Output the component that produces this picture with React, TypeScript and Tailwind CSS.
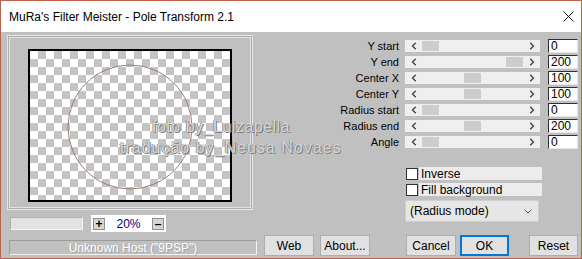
import React from "react";

const sliders = [
  { label: "Y start", value: "0", pos: 0 },
  { label: "Y end", value: "200", pos: 1 },
  { label: "Center X", value: "100", pos: 0.5 },
  { label: "Center Y", value: "100", pos: 0.5 },
  { label: "Radius start", value: "0", pos: 0 },
  { label: "Radius end", value: "200", pos: 0.5 },
  { label: "Angle", value: "0", pos: 0 },
];

function Chevron({ dir }: { dir: "l" | "r" }) {
  return (
    <svg width="6" height="8" viewBox="0 0 6 8" className="shrink-0">
      <path
        d={dir === "l" ? "M4.8 0.8 L1.5 4 L4.8 7.2" : "M1.2 0.8 L4.5 4 L1.2 7.2"}
        fill="none"
        stroke="#4a4a4a"
        strokeWidth="1.4"
      />
    </svg>
  );
}

function SliderRow({ label, value, pos }: { label: string; value: string; pos: number }) {
  return (
    <div className="flex h-[16px] items-center">
      <span className="w-[135px] text-right text-[11px] leading-none text-black">{label}</span>
      <div className="ml-[6px] flex h-[12px] w-[135px] bg-[#efefef]">
        <div className="flex w-[17px] items-center justify-center">
          <Chevron dir="l" />
        </div>
        <div className="relative flex-1">
          <div className="absolute top-[1px] bottom-[1px] w-[17px] bg-[#cdcdcd]" style={{ left: pos * 84 }} />
        </div>
        <div className="flex w-[17px] items-center justify-center">
          <Chevron dir="r" />
        </div>
      </div>
      <div className="ml-[8px] flex h-[14px] w-[30px] items-center border border-t-[#303030] border-l-[#303030] border-r-[#e6e6e6] border-b-[#e6e6e6] bg-white pl-[2px] text-[12px] leading-none">
        {value}
      </div>
    </div>
  );
}

function CheckRow({ label }: { label: string }) {
  return (
    <div className="ml-[142px] flex h-[13px] items-center">
      <div className="h-[12px] w-[12px] border border-[#333] bg-white" />
      <div className="ml-[1px] flex h-[13px] w-[123px] items-center bg-[#ececec] pl-[2px] text-[12px] leading-none">
        {label}
      </div>
    </div>
  );
}

function Btn({ children, className = "" }: { children: React.ReactNode; className?: string }) {
  return (
    <div
      className={`flex h-[21px] items-center justify-center bg-[#e1e1e1] text-[12px] leading-none text-black ${className}`}
    >
      {children}
    </div>
  );
}

export default function App() {
  return (
    <div className="flex h-[259px] w-[582px] flex-col border border-[#c2604a] font-['Liberation_Sans',Arial,sans-serif]">
      <div className="flex h-[31px] items-center justify-between bg-white pl-[8px] pr-[7px]">
        <span className="text-[12px] text-black">MuRa's Filter Meister - Pole Transform 2.1</span>
        <svg width="11" height="11" viewBox="0 0 11 11">
          <path d="M0.5 0.5 L10.5 10.5 M10.5 0.5 L0.5 10.5" stroke="#111" strokeWidth="1" />
        </svg>
      </div>

      <div className="relative flex flex-1 bg-[#c0c0c0] pl-[6px]">
        {/* left column */}
        <div className="flex w-[250px] flex-col">
          <div className="mt-[3px] flex h-[175px] w-[246px] justify-center border border-[#e6e6e6] pt-[13px] shadow-[inset_0_0_0_1px_#aeaeae,inset_0_0_0_2px_#e2e2e2]">
            <div className="relative h-[153px] w-[204px] border-2 border-black bg-[conic-gradient(#c4c4c4_25%,#fff_0_50%,#c4c4c4_0_75%,#fff_0)] bg-[length:16px_16px]">
              <svg width="200" height="149" viewBox="0 0 200 149" className="absolute inset-0">
                <circle cx="100" cy="76" r="62" fill="none" stroke="#9c7a6e" strokeWidth="1" />
              </svg>
            </div>
          </div>

          <div className="mt-[5px] flex h-[17px] items-center">
            <div className="ml-[3px] h-[13px] w-[73px] border border-t-[#b0b0b0] border-l-[#b0b0b0] border-r-[#f4f4f4] border-b-[#f4f4f4] bg-[#e2e2e2]" />
            <div className="ml-[8px] flex h-[17px] w-[75px] items-center bg-white px-[2px]">
              <div className="flex h-[12px] w-[12px] items-center justify-center border border-[#909090] bg-[#d6d6d6] text-[12px] font-bold leading-none">
                +
              </div>
              <span className="flex-1 text-center text-[12px] leading-none text-[#000080]">20%</span>
              <div className="flex h-[12px] w-[12px] items-center justify-center border border-[#909090] bg-[#d6d6d6] text-[12px] font-bold leading-none">
                –
              </div>
            </div>
          </div>

          <div className="mt-[8px] ml-[2px] flex h-[15px] w-[248px] items-center justify-center border border-t-[#9c9c9c] border-l-[#9c9c9c] border-r-[#f0f0f0] border-b-[#f0f0f0] text-[12px] leading-none text-white [text-shadow:1px_1px_0_#a4a4a4]">
            Unknown Host ("9PSP")
          </div>
        </div>

        {/* right column */}
        <div className="ml-[7px] flex w-[314px] flex-col pt-[6px]">
          {sliders.map((s) => (
            <SliderRow key={s.label} {...s} />
          ))}

          <div className="mt-[17px] flex flex-col gap-[3px]">
            <CheckRow label="Inverse" />
            <CheckRow label="Fill background" />
          </div>

          <div className="mt-[4px] ml-[141px] flex h-[22px] w-[134px] items-center justify-between border border-[#cfcfcf] bg-[#e6e6e6] pl-[4px] pr-[6px] text-[12px] leading-none">
            <span>(Radius mode)</span>
            <svg width="8" height="5" viewBox="0 0 8 5">
              <path d="M0.5 0.5 L4 4 L7.5 0.5" fill="none" stroke="#555" strokeWidth="1" />
            </svg>
          </div>

          <div className="mt-[13px] flex">
            <Btn className="w-[50px] border border-[#adadad]">Web</Btn>
            <Btn className="ml-[6px] w-[50px] border border-[#adadad]">About...</Btn>
            <Btn className="ml-[36px] w-[50px] border border-[#adadad]">Cancel</Btn>
            <Btn className="ml-[4px] w-[49px] border-2 border-[#0078d7]">OK</Btn>
            <Btn className="ml-[20px] w-[49px] border border-[#adadad]">Reset</Btn>
          </div>
        </div>

        {/* watermark overlay */}
        <div className="pointer-events-none absolute top-[86px] left-[151px] text-[16px] leading-[18px] tracking-[0.5px] text-[#d6d6d6] [text-shadow:1px_1px_0_#7c7c7c,-1px_0_0_#9a9a9a]">
          foto by_Luizapella
        </div>
        <div className="pointer-events-none absolute top-[107px] left-[119px] text-[16px] leading-[18px] tracking-[1px] text-[#d6d6d6] [text-shadow:1px_1px_0_#7c7c7c,-1px_0_0_#9a9a9a]">
          tradução by_Neusa Novaes
        </div>
      </div>
    </div>
  );
}
